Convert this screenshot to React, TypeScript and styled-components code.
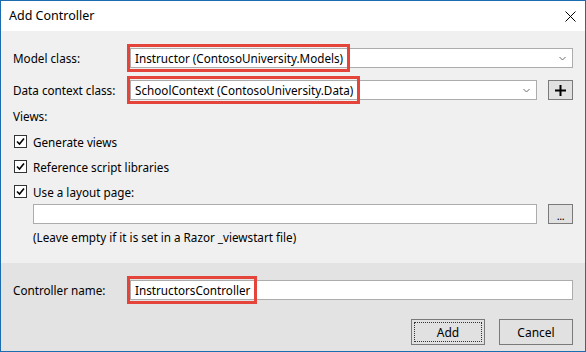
import React from "react";
import styled, { createGlobalStyle } from "styled-components";

const Global = createGlobalStyle`
  html, body { margin: 0; padding: 0; background: #fff; }
  * { box-sizing: border-box; }
`;

const Window = styled.div`
  width: 586px;
  height: 352px;
  border: 1px solid #1e6cb0;
  display: flex;
  flex-direction: column;
  font-family: "Noto Sans", sans-serif;
  font-size: 11.7px;
  color: #000;
  overflow: hidden;
`;

const TitleBar = styled.div`
  height: 30px;
  flex: none;
  background: #fff;
  display: flex;
  align-items: center;
  justify-content: space-between;
  padding: 0 9px 0 8px;
`;

const Title = styled.span`
  font-size: 12.5px;
  line-height: 16px;
`;

const CloseIcon = styled.svg`
  width: 11px;
  height: 11px;
  display: block;
`;

const Body = styled.div`
  flex: 1;
  background: #f0f0f0;
  padding: 17px 12px 0 12px;
  display: flex;
  flex-direction: column;
`;

const Footer = styled.div`
  height: 88px;
  flex: none;
  background: #e3e3e3;
  padding: 17px 12px 6px 12px;
  display: flex;
  flex-direction: column;
`;

const FieldRow = styled.div<{ $mt?: number }>`
  display: grid;
  grid-template-columns: 106px 1fr auto;
  align-items: center;
  column-gap: 11px;
  height: 20px;
  margin-top: ${(p) => p.$mt ?? 0}px;
`;

const FieldLabel = styled.span`
  line-height: 16px;
  white-space: nowrap;
`;

const FieldWrap = styled.div<{ $span?: boolean }>`
  height: 20px;
  grid-column: ${(p) => (p.$span ? "2 / 4" : "2 / 3")};
`;

const Combo = styled.div`
  height: 20px;
  background: #fff;
  border: 1px solid #acacac;
  display: flex;
  align-items: center;
  justify-content: space-between;
  padding: 0 6px 0 4px;
  line-height: 16px;
  white-space: nowrap;
`;

const TextBox = styled.div`
  height: 20px;
  background: #fff;
  border: 1px solid #acacac;
  display: flex;
  align-items: center;
  padding: 0 4px;
  line-height: 16px;
  white-space: nowrap;
`;

const Chevron = styled.svg`
  width: 7px;
  height: 5px;
  display: block;
  flex: none;
`;

/* red annotation frame drawn over the highlighted value */
const Marked = styled.span`
  position: relative;
  &::after {
    content: "";
    position: absolute;
    left: -8px;
    right: -7px;
    top: -6px;
    bottom: -6px;
    border: 3px solid #e5443b;
    pointer-events: none;
  }
`;

const SmallButton = styled.div`
  width: 25px;
  height: 20px;
  background: #e1e1e1;
  border: 1px solid #7a7a7a;
  display: flex;
  align-items: center;
  justify-content: center;
`;

const Dots = styled.span`
  font-size: 11px;
  line-height: 11px;
  letter-spacing: -0.5px;
  padding-top: 2px;
`;

const SectionLabel = styled.div`
  line-height: 16px;
  margin-top: 8px;
`;

const CheckList = styled.div`
  display: flex;
  flex-direction: column;
  margin-top: 5px;
`;

const CheckRow = styled.label`
  height: 25px;
  display: flex;
  align-items: center;
  gap: 6px;
  padding-left: 1px;
`;

const CheckBox = styled.span`
  width: 13px;
  height: 13px;
  border: 1px solid #333;
  background: #fff;
  display: flex;
  align-items: center;
  justify-content: center;
  flex: none;
`;

const IndentRow = styled.div`
  display: flex;
  align-items: center;
  gap: 11px;
  padding-left: 20px;
  height: 20px;
`;

const Grow = styled.div`
  flex: 1;
`;

const Hint = styled.div`
  line-height: 16px;
  margin-top: 5px;
  padding-left: 20px;
`;

const ButtonBar = styled.div`
  margin-top: auto;
  display: flex;
  justify-content: flex-end;
  gap: 14px;
`;

const DialogButton = styled.div<{ $default?: boolean }>`
  width: 74px;
  height: 26px;
  background: #e1e1e1;
  border: 1px solid #7a7a7a;
  display: flex;
  align-items: center;
  justify-content: center;
  position: relative;
  font-size: 12px;
  &::after {
    content: "";
    display: ${(p) => (p.$default ? "block" : "none")};
    position: absolute;
    inset: 2px;
    border: 1px dotted #333;
  }
`;

const ChevronIcon = () => (
  <Chevron viewBox="0 0 7 5">
    <path d="M0.5 1 L3.5 4 L6.5 1" fill="none" stroke="#6d6d6d" strokeWidth="1" />
  </Chevron>
);

const Check = () => (
  <svg width="9" height="9" viewBox="0 0 9 9" style={{ display: "block" }}>
    <path d="M1 4.5 L3.5 7 L8 1.5" fill="none" stroke="#000" strokeWidth="1.6" />
  </svg>
);

export default function App() {
  return (
    <>
      <Global />
      <Window>
        <TitleBar>
          <Title>Add Controller</Title>
          <CloseIcon viewBox="0 0 11 11">
            <path d="M0.5 0.5 L10.5 10.5 M10.5 0.5 L0.5 10.5" stroke="#000" strokeWidth="1" fill="none" />
          </CloseIcon>
        </TitleBar>
        <Body>
          <FieldRow>
            <FieldLabel>Model class:</FieldLabel>
            <FieldWrap $span>
              <Combo>
                <Marked>Instructor (ContosoUniversity.Models)</Marked>
                <ChevronIcon />
              </Combo>
            </FieldWrap>
          </FieldRow>
          <FieldRow $mt={12}>
            <FieldLabel>Data context class:</FieldLabel>
            <FieldWrap>
              <Combo>
                <Marked>SchoolContext (ContosoUniversity.Data)</Marked>
                <ChevronIcon />
              </Combo>
            </FieldWrap>
            <SmallButton>
              <svg width="11" height="11" viewBox="0 0 11 11" style={{ display: "block" }}>
                <path d="M5.5 0 V11 M0 5.5 H11" stroke="#000" strokeWidth="2" />
              </svg>
            </SmallButton>
          </FieldRow>
          <SectionLabel>Views:</SectionLabel>
          <CheckList>
            <CheckRow>
              <CheckBox><Check /></CheckBox>
              Generate views
            </CheckRow>
            <CheckRow>
              <CheckBox><Check /></CheckBox>
              Reference script libraries
            </CheckRow>
            <CheckRow>
              <CheckBox><Check /></CheckBox>
              Use a layout page:
            </CheckRow>
          </CheckList>
          <IndentRow>
            <Grow>
              <TextBox />
            </Grow>
            <SmallButton>
              <Dots>...</Dots>
            </SmallButton>
          </IndentRow>
          <Hint>(Leave empty if it is set in a Razor _viewstart file)</Hint>
        </Body>
        <Footer>
          <FieldRow>
            <FieldLabel>Controller name:</FieldLabel>
            <FieldWrap $span>
              <TextBox>
                <Marked>InstructorsController</Marked>
              </TextBox>
            </FieldWrap>
          </FieldRow>
          <ButtonBar>
            <DialogButton $default>Add</DialogButton>
            <DialogButton>Cancel</DialogButton>
          </ButtonBar>
        </Footer>
      </Window>
    </>
  );
}
